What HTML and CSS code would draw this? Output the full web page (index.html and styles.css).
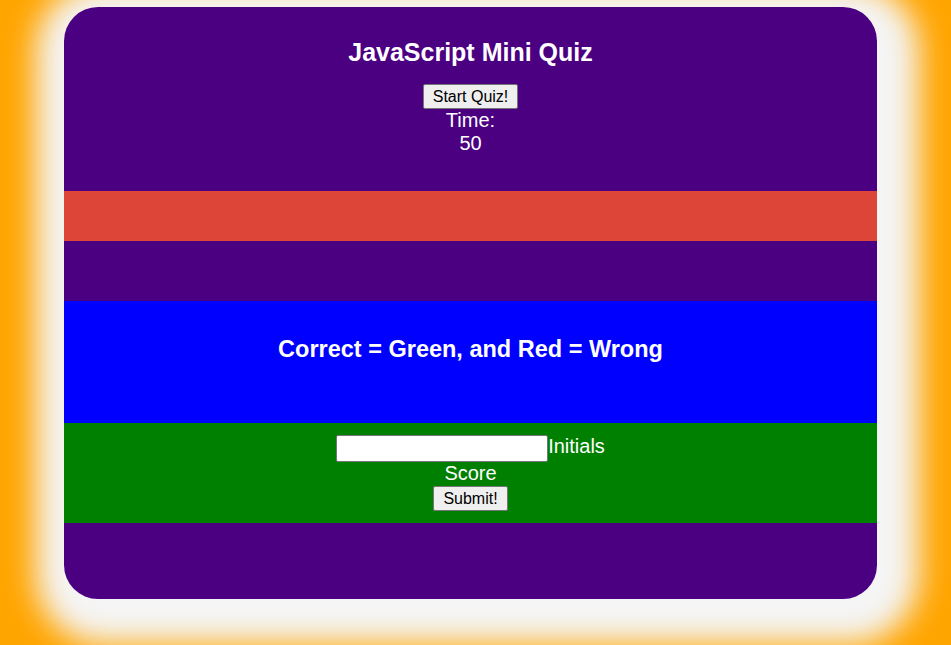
FILE: index.html
```html
<!DOCTYPE html>
<html lang="en">
<head>
<meta charset="utf-8">
<title>JavaScript Mini Quiz</title>
<link rel="stylesheet" href="styles.css">
</head>
<body>
<main class="quiz">
  <header class="top">
    <h1 class="title">JavaScript Mini Quiz</h1>
    <button class="btn" type="button">Start Quiz!</button>
    <div class="timer">Time:</div>
    <div class="timer">50</div>
  </header>
  <section class="question"></section>
  <section class="choices"></section>
  <section class="result">
    <h2 class="result-text">Correct = Green, and Red = Wrong</h2>
  </section>
  <form class="scores">
    <div class="line"><input class="initials" type="text"><span>Initials</span></div>
    <div class="line">Score</div>
    <div class="line"><button class="btn" type="button">Submit!</button></div>
  </form>
  <footer class="bottom"></footer>
</main>
</body>
</html>
```
FILE: styles.css
```css
html, body {
  margin: 0;
  padding: 0;
}
body {
  background: #ffa500;
  width: 951px;
  height: 645px;
  overflow: hidden;
  font-family: "Liberation Sans", Arial, sans-serif;
  color: #fff;
}
.quiz {
  margin: 7px 0 0 64px;
  width: 813px;
  height: 592px;
  border-radius: 34px;
  background: #4b0082;
  overflow: hidden;
  box-shadow: 7px 10px 30px 35px #f5f5f5;
  display: flex;
  flex-direction: column;
}
.top {
  height: 184px;
  box-sizing: border-box;
  padding-top: 31px;
  text-align: center;
  font-size: 20px;
}
.title {
  margin: 0 0 17px;
  font-size: 25px;
  font-weight: bold;
  line-height: 29px;
}
.btn {
  font-family: "Liberation Sans", Arial, sans-serif;
  font-size: 16px;
  line-height: 18px;
  padding: 1px 9px;
  border: 1px solid #767676;
  border-radius: 2px;
  background: #efefef;
  color: #000;
  height: 25px;
  box-sizing: border-box;
  vertical-align: top;
}
.timer {
  line-height: 23px;
}
.question {
  height: 50px;
  background: #dd4539;
}
.choices {
  height: 60px;
}
.result {
  height: 122px;
  background: #0000ff;
  display: flex;
  justify-content: center;
  padding-top: 35px;
  box-sizing: border-box;
}
.result-text {
  margin: 0;
  font-size: 23.5px;
  line-height: 27px;
  font-weight: bold;
}
.scores {
  margin: 0;
  height: 100px;
  background: #008000;
  box-sizing: border-box;
  padding-top: 12px;
  text-align: center;
  font-size: 20px;
  line-height: 23px;
}
.scores .line:first-child {
  display: flex;
  justify-content: center;
  align-items: flex-start;
  height: 27px;
}
.scores .line:first-child span {
  line-height: 23px;
}
.initials {
  width: 212px;
  height: 27px;
  box-sizing: border-box;
  border: 1px solid #767676;
  border-radius: 2px;
  background: #fff;
  padding: 1px 2px;
  margin: 0;
}
.scores .line:last-child {
  margin-top: 1px;
}
.bottom {
  flex: 1;
}
```
